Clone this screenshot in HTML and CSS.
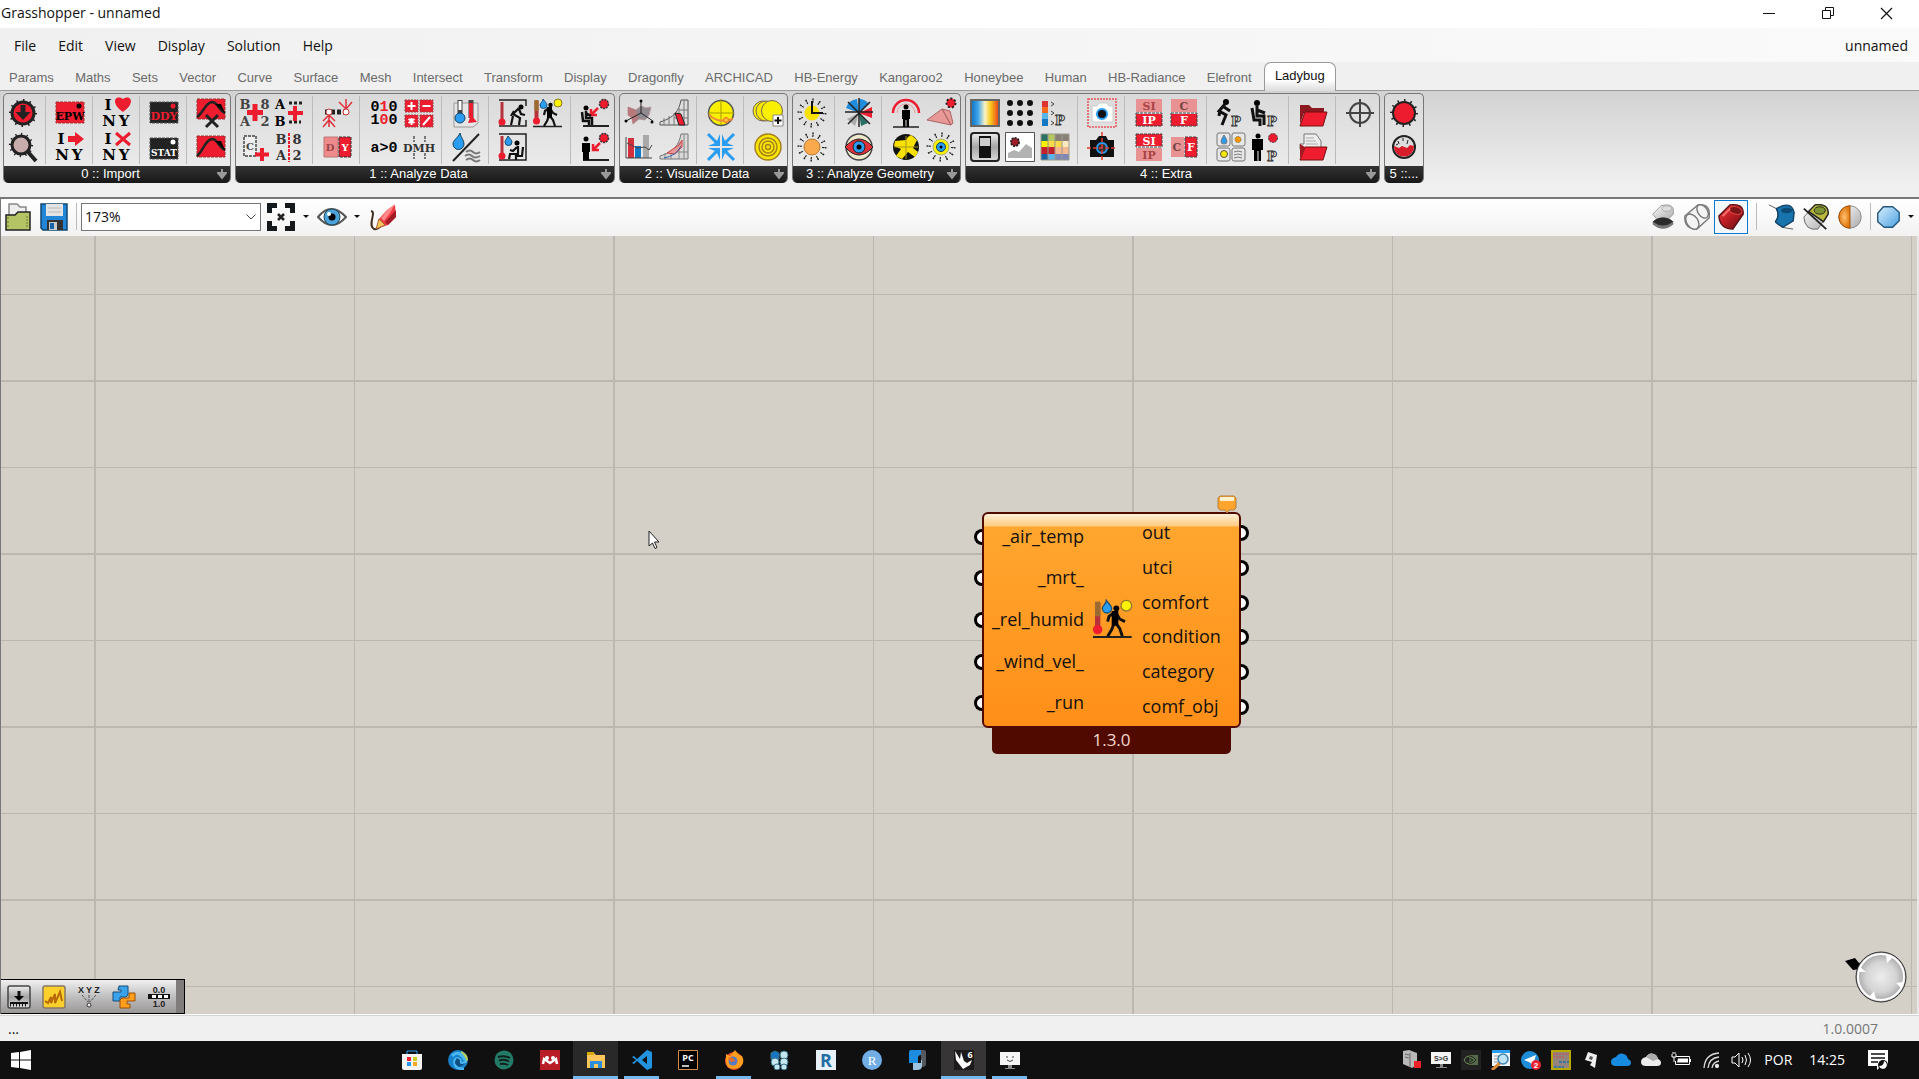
FILE: index.html
```html
<!DOCTYPE html>
<html lang="en">
<head>
<meta charset="utf-8">
<title>Grasshopper - unnamed</title>
<link rel="stylesheet" href="styles.css">
</head>
<body>
<svg class="defs" aria-hidden="true">
  <defs>
    <linearGradient id="spectrum"><stop offset="0" stop-color="#0a6fc0"/><stop offset=".25" stop-color="#3fa4ea"/><stop offset=".5" stop-color="#fbf3c4"/><stop offset=".7" stop-color="#f8c81c"/><stop offset="1" stop-color="#e83a1c"/></linearGradient>
    <linearGradient id="metal" x2="0" y2="1"><stop offset="0" stop-color="#eee"/><stop offset=".5" stop-color="#a5a5a5"/><stop offset="1" stop-color="#dcdcdc"/></linearGradient>
    <linearGradient id="redfade" x2="1" y2="1"><stop offset="0" stop-color="#f04040"/><stop offset=".5" stop-color="#b81c22"/><stop offset="1" stop-color="#5c0c10"/></linearGradient>
    <linearGradient id="bluefade" x2="1" y2="1"><stop offset="0" stop-color="#d8f0ff"/><stop offset="1" stop-color="#4a9fe0"/></linearGradient>
    <linearGradient id="greyfade" x2="1" y2="1"><stop offset="0" stop-color="#fff"/><stop offset="1" stop-color="#aaa"/></linearGradient>
    <radialGradient id="dial"><stop offset="0" stop-color="#ededed"/><stop offset=".6" stop-color="#d4d4d4"/><stop offset="1" stop-color="#a2a2a2"/></radialGradient>
    <radialGradient id="orange"><stop offset="0" stop-color="#ffc070"/><stop offset="1" stop-color="#e07810"/></radialGradient>
    <symbol id="walker" viewBox="0 0 30 30"><path d="M0 28.500H29" stroke="#222" stroke-width="1.500"/><path d="M3.500 3V22" stroke="#b5323a" stroke-width="4"/><path d="M3.500 2V13" stroke="#9a6a30" stroke-width="4"/><circle cx="3.500" cy="23" r="3.500" fill="#ed1c2e"/><path d="M10 1c2 3 4 4 4 6a3.500 3.500 0 0 1-7 0c0-2 3-3 3-6z" fill="#2a9df0" stroke="#1a527c"/><circle cx="25" cy="5" r="4" fill="#fff200" stroke="#887a30"/><circle cx="17.500" cy="7" r="2.200"/><path d="M16 10l-4 3-1 4M17 10l3 5 4 2M16 18l-2 5-3 5M17 18l3 4 2 6" fill="none" stroke="#111" stroke-width="2.200"/><path d="M14 9h5v11h-5z"/></symbol>
    <symbol id="spikes" viewBox="0 0 30 30"><circle cx="15" cy="15" r="12.500" fill="none" stroke="#222" stroke-width="3" stroke-dasharray="1.500 5"/></symbol>
    <symbol id="rays" viewBox="0 0 30 30"><g fill="none" stroke="#222"><circle cx="15" cy="15" r="13.500" stroke-width="2" stroke-dasharray="1.500 5.560"/><circle cx="15" cy="15" r="11" stroke-width="2" stroke-dasharray="1.200 4.560"/></g></symbol>
    <symbol id="drop" viewBox="0 0 10 11"><path d="M5 0v5M1 4h8L5 9z" fill="#999" stroke="#999" stroke-width="2"/></symbol>
  </defs>
</svg>

<header class="titlebar">
  <span class="title">Grasshopper - unnamed</span>
  <div class="window-buttons">
    <button aria-label="Minimize"><svg width="12" height="12"><path d="M0 6.500H12" stroke="#111"/></svg></button>
    <button aria-label="Restore"><svg width="12" height="12" fill="none" stroke="#111"><path d="M.5 3.500H8.500V11.500H.5zM3.500 3V.5H11.500V8.500H9"/></svg></button>
    <button aria-label="Close"><svg width="13" height="13"><path d="M1 1L12 12M12 1L1 12" stroke="#111" stroke-width="1.200"/></svg></button>
  </div>
</header>

<nav class="menubar">
  <button>File</button><button>Edit</button><button>View</button><button>Display</button><button>Solution</button><button>Help</button>
  <span class="doc-name">unnamed</span>
</nav>

<nav class="tabs">
  <button>Params</button><button>Maths</button><button>Sets</button><button>Vector</button><button>Curve</button><button>Surface</button><button>Mesh</button><button>Intersect</button><button>Transform</button><button>Display</button><button>Dragonfly</button><button>ARCHICAD</button><button>HB-Energy</button><button>Kangaroo2</button><button>Honeybee</button><button>Human</button><button>HB-Radiance</button><button>Elefront</button><button class="active">Ladybug</button>
</nav>

<section class="ribbon">
  <div class="panel">
    <div class="groups">
      <div class="group">
        <button aria-label="Download weather"><svg viewBox="0 0 30 30"><use href="#spikes"/><circle cx="15" cy="15" r="11" fill="#ed1c2e" stroke="#222" stroke-width="3"/><path d="M12.500 7h5v7h5L15 22l-7.500-8h5z" fill="#222"/></svg></button>
        <button aria-label="EPWmap"><svg viewBox="0 0 30 30"><use href="#spikes" width="26" height="26"/><path d="M20 20L28 29" stroke="#222" stroke-width="4"/><circle cx="13" cy="13" r="9" fill="#c9acac" stroke="#222" stroke-width="3"/></svg></button>
      </div>
      <div class="group">
        <button aria-label="Import EPW"><svg viewBox="0 0 30 30"><path d="M1 4h28v21H1z" fill="#ed1c2e" stroke="#a33" stroke-dasharray="3 1"/><circle cx="24" cy="8" r="2.500"/><text x="15" y="22" font-size="11">EPW</text></svg></button>
        <button aria-label="Import location"><svg viewBox="0 0 30 30"><g class="big"><text x="6" y="12">I</text><text x="7" y="28">N</text><text x="22" y="28">Y</text></g><path d="M13 4h7V0l9 7-9 7v-4h-7z" fill="#ed1c2e"/></svg></button>
      </div>
      <div class="group">
        <button aria-label="Construct location"><svg viewBox="0 0 30 30"><g class="big"><text x="6" y="12">I</text><text x="7" y="28">N</text><text x="22" y="28">Y</text></g><path d="M21 14C8 5 13-4 21 1c8-5 13 4 0 13z" fill="#ed1c2e"/></svg></button>
        <button aria-label="Deconstruct location"><svg viewBox="0 0 30 30"><g class="big"><text x="6" y="12">I</text><text x="7" y="28">N</text><text x="22" y="28">Y</text></g><path d="M14 1L28 13M28 1L14 13" stroke="#ed1c2e" stroke-width="3"/></svg></button>
      </div>
      <div class="group">
        <button aria-label="Import DDY"><svg viewBox="0 0 30 30"><path d="M1 4h28v21H1z" fill="#222" stroke="#555" stroke-dasharray="3 1"/><circle cx="24" cy="8" r="2.500" fill="#ed1c2e"/><text x="15" y="22" font-size="11" fill="#ed1c2e">DDY</text></svg></button>
        <button aria-label="Import STAT"><svg viewBox="0 0 30 30"><path d="M1 6h28v21H1z" fill="#222" stroke="#555" stroke-dasharray="3 1"/><circle cx="24" cy="10" r="2.500" fill="#fff"/><text x="15" y="24" font-size="9" fill="#fff">STAT</text></svg></button>
      </div>
      <div class="group">
        <button aria-label="Design day"><svg viewBox="0 0 30 30"><path d="M1 1h28v20H1z" fill="#ed1c2e" stroke="#933" stroke-dasharray="3 1"/><path d="M1 19C8 14 9 5 16 4c6 0 6 8 13 11" fill="none" stroke="#222" stroke-width="2.500"/><path d="M19 6h6l4 9z"/><path d="M10 17L22 29M22 17L10 29" stroke="#222" stroke-width="3"/></svg></button>
        <button aria-label="Import design day"><svg viewBox="0 0 30 30"><path d="M1 4h28v21H1z" fill="#ed1c2e" stroke="#933" stroke-dasharray="3 1"/><path d="M1 24C8 18 9 8 16 7c6 0 6 8 13 11" fill="none" stroke="#222" stroke-width="2.500"/><path d="M19 9h6l4 9z"/></svg></button>
      </div>
    </div>
    <div class="label"><span>0 :: Import</span><svg><use href="#drop"/></svg></div>
  </div>

  <div class="panel">
    <div class="groups">
      <div class="group two">
        <button aria-label="Arithmetic"><svg viewBox="0 0 30 30"><g fill="#444"><text x="5" y="11">B</text><text x="25" y="11">8</text><text x="5" y="28">A</text><text x="25" y="28">2</text></g><path d="M15 6V23M7 14.500H23" stroke="#ed1c2e" stroke-width="5"/></svg></button>
        <button aria-label="Construct data"><svg viewBox="0 0 30 30"><text x="5" y="11">A</text><text x="5" y="28">B</text><path d="M14 5h15M14 24h12" stroke="#222" stroke-width="3" stroke-dasharray="3 2"/><path d="M20 8V23M13 15H28" stroke="#ed1c2e" stroke-width="4"/></svg></button>
        <button aria-label="Construct header"><svg viewBox="0 0 30 30"><path d="M4 4h12v20H4z" fill="#eee" stroke="#444" stroke-width="1.500" stroke-dasharray="3 1"/><text x="10" y="18" font-size="10" fill="#444">C</text><path d="M22 16V29M15 22.500H29" stroke="#ed1c2e" stroke-width="4"/></svg></button>
        <button aria-label="Deconstruct data"><svg viewBox="0 0 30 30"><g fill="#333"><text x="6" y="12">B</text><text x="22" y="12">8</text><text x="6" y="28">A</text><text x="22" y="28">2</text></g><path d="M14 1V30" stroke="#ed1c2e" stroke-width="2" stroke-dasharray="3 1"/></svg></button>
      </div>
      <div class="group">
        <button aria-label="Average data"><svg viewBox="0 0 30 30"><path d="M3 14h23" stroke="#222" stroke-width="5" stroke-dasharray="4 2"/><path d="M7 29V16M1 23l6-6 6 6M1 29l6-7 6 7M24 1v10M17 4l7 7 6-7" fill="none" stroke="#e2303a" stroke-width="1.500"/><circle cx="7" cy="14" r="3" fill="#fff" stroke="#c33"/><circle cx="24" cy="14" r="3" fill="#fff" stroke="#c33"/></svg></button>
        <button aria-label="Day to year"><svg viewBox="0 0 30 30"><path d="M2 5h14v20H2z" fill="#ee8a8c" stroke="#bb7777"/><path d="M17 5h12v20H17z" fill="#ed1c2e" stroke="#333" stroke-dasharray="3 1"/><text x="8" y="19" font-size="10" fill="#944">D</text><text x="23" y="19" font-size="10" fill="#fff">Y</text></svg></button>
      </div>
      <div class="group two">
        <button aria-label="Pattern"><svg viewBox="0 0 30 30"><g class="mono"><text x="15" y="13">0<tspan fill="#ed1c2e">1</tspan>0</text><text x="15" y="26">1<tspan fill="#ed1c2e">0</tspan>0</text></g></svg></button>
        <button aria-label="Data math"><svg viewBox="0 0 30 30"><path d="M1 2h13v12H1zM16 2h13v12H16zM1 17h13v12H1zM16 17h13v12H16z" fill="#ed1c2e" stroke="#944" stroke-dasharray="2 1"/><path d="M7.500 4v8M3.500 8h8M18.500 8h8M4.500 21l6 4M4.500 25l6-4M7.500 20v7M19 27l7-8" stroke="#fff" stroke-width="2"/></svg></button>
        <button aria-label="Conditional"><svg viewBox="0 0 30 30"><g class="mono"><text x="15" y="20">a&gt;0</text></g></svg></button>
        <button aria-label="Time interval"><svg viewBox="0 0 30 30"><path d="M10 4V10M10 21V27M21 4V10M21 21V27" stroke="#555" stroke-width="1.500" stroke-dasharray="3 1"/><text x="15" y="20" font-size="11" fill="#333">DMH</text></svg></button>
      </div>
      <div class="group">
        <button aria-label="Dry bulb and dew point"><svg viewBox="0 0 30 30"><path d="M3 5h24v20l-5 4H3z" fill="#e6e6e6" stroke="#999"/><path d="M9 2V18M20 2V20" stroke="#444" stroke-width="5"/><path d="M9 3V12" stroke="#fff" stroke-width="3"/><path d="M20 5V20" stroke="#ed1c2e" stroke-width="4"/><circle cx="9" cy="20" r="5" fill="#2a9df0" stroke="#146"/><path d="M20 17l6 7-9 1z" fill="#ed1c2e"/></svg></button>
        <button aria-label="Humidity ratio"><svg viewBox="0 0 30 30"><path d="M2 29L28 2" stroke="#222" stroke-width="2"/><path d="M9 1c1 5 4 7 4 11a5 5 0 0 1-11 0C2 8 7 6 9 1z" fill="#2a9df0" stroke="#146"/><path d="M15 20q4-3 7 0t7 0M14 24q4-3 7 0t8 0M15 28q4-3 7 0t7 0" fill="none" stroke="#777" stroke-width="2"/></svg></button>
      </div>
      <div class="group two">
        <button aria-label="Adaptive comfort"><svg viewBox="0 0 30 30"><path d="M1 2H28V8M28 22V28H1" fill="none" stroke="#222" stroke-width="1.500"/><path d="M4 4V22" stroke="#b5323a" stroke-width="3"/><circle cx="4" cy="24" r="3.500" fill="#ed1c2e"/><circle cx="23" cy="9" r="2.500"/><path d="M21 10l-6 6 7 4-1 7M16 13l-3 5M15 18l-2 9M21 11l2 5 4 1" fill="none" stroke="#111" stroke-width="2.200"/></svg></button>
        <button aria-label="UTCI comfort"><svg><use href="#walker"/></svg></button>
        <button aria-label="PMV comfort"><svg viewBox="0 0 30 30"><path d="M1 2H28V28H1" fill="none" stroke="#222" stroke-width="1.500"/><path d="M4 4V22" stroke="#b5323a" stroke-width="3"/><circle cx="4" cy="24" r="3.500" fill="#ed1c2e"/><path d="M10 4c2 3 4 4 4 6a3.500 3.500 0 0 1-7 0c0-2 2-3 3-6z" fill="#2a9df0" stroke="#146"/><circle cx="19" cy="11" r="2.500"/><path d="M20 14v8h-8l-1 5M19 15l-4 4-3-1M25 15l-1 9h-6v4" fill="none" stroke="#111" stroke-width="2.200"/></svg></button>
      </div>
      <div class="group">
        <button aria-label="Indoor solar MRT"><svg viewBox="0 0 30 30"><path d="M3 28H29" stroke="#222" stroke-width="2"/><circle cx="24" cy="6" r="4.500" fill="#ed1c2e" stroke="#333" stroke-width="1.500" stroke-dasharray="2 1"/><path d="M18 10l-6 6m-1-5v6h6" stroke="#ed1c2e" stroke-width="2.500" fill="none"/><circle cx="6" cy="10" r="2.500"/><path d="M6 13v7h6v7M2 14l1 9h6v4M6 15l5 3" fill="none" stroke="#111" stroke-width="2.500"/></svg></button>
        <button aria-label="Outdoor solar MRT"><svg viewBox="0 0 30 30"><path d="M3 28H29" stroke="#222" stroke-width="2"/><circle cx="24" cy="6" r="4.500" fill="#ed1c2e" stroke="#333" stroke-width="1.500" stroke-dasharray="2 1"/><path d="M20 11l-6 6m-1-5v6h6" stroke="#ed1c2e" stroke-width="2.500" fill="none"/><circle cx="6" cy="7" r="2.500"/><path d="M2 11h8v9H9v8H3v-8H2z"/></svg></button>
      </div>
    </div>
    <div class="label"><span>1 :: Analyze Data</span><svg><use href="#drop"/></svg></div>
  </div>

  <div class="panel">
    <div class="groups">
      <div class="group two">
        <button aria-label="Wind profile"><svg viewBox="0 0 30 30"><path d="M4 9l8 3 5-4 5 2 5-1-2 8-4 5-6-1-6 5-1-6-4-3z" fill="#8e8a90" stroke="#b99"/><path d="M4 9l8 3 2 8-5 6-1-6-4-3z" fill="#b8787c"/><path d="M17 3V15L2 23M17 15l12 8" fill="none" stroke="#222"/><circle cx="2" cy="23" r="1.500"/><circle cx="28" cy="24" r="1.500"/><circle cx="17" cy="3" r="1.500"/></svg></button>
        <button aria-label="Psychrometric chart"><svg viewBox="0 0 30 30"><path d="M1 27V24C15 20 20 13 22 2h7V27z" fill="#ddd" stroke="#555"/><path d="M5 20V27M10 18V27M15 15V27M20 10V27M25 2V27M20 12h9M15 20h14" stroke="#777"/><path d="M16 15l6 1 4 11h-6z" fill="#ed1c2e" stroke="#222"/></svg></button>
        <button aria-label="Monthly chart"><svg viewBox="0 0 30 30"><path d="M4 6h6v20H4z" fill="#d32f3c"/><path d="M11 14h6v12h-6z" fill="#1479c4"/><path d="M19 3h6v23h-6z" fill="#a9a9a9"/><path d="M2 5V26H28M3 11l10 5 8-1 4 3 3-5" fill="none" stroke="#444"/></svg></button>
        <button aria-label="Adaptive chart"><svg viewBox="0 0 30 30"><path d="M1 27V24C15 20 20 13 22 2h7V27z" fill="#d8d8d8" stroke="#777"/><path d="M6 21V27M12 18V27M20 10V27M25 2V27M15 20h14" stroke="#888"/><path d="M8 21l12-8 3-5v7l-7 7z" fill="#e89a98" stroke="#c44"/><path d="M5 26q12-2 17-12" stroke="#36a" fill="none"/></svg></button>
      </div>
      <div class="group">
        <button aria-label="Sunpath"><svg viewBox="0 0 30 30"><circle cx="15" cy="15" r="12.500" fill="#f8f000" stroke="#555" stroke-width="1.500"/><path d="M15 1V27M2 15H28" stroke="#a90"/><path d="M3 17q10 9 24 4" fill="none" stroke="#e84" stroke-width="2"/><circle cx="20" cy="22" r="2.500" fill="#fb3" stroke="#e63"/></svg></button>
        <button aria-label="Wind rose"><svg viewBox="0 0 30 30"><path d="M2 2l9 9M28 2l-9 9M2 28l9-9M28 28l-9-9" stroke="#2a9df0" stroke-width="3"/><path d="M14 2V14H2l7-3-3-4 5 2zM16 2V14H28l-7-3 3-4-5 2zM14 28V16H2l7 3-3 4 5-2zM16 28V16H28l-7 3 3 4-5-2z" fill="#2a9df0"/></svg></button>
      </div>
      <div class="group">
        <button aria-label="Sky mask"><svg viewBox="0 0 30 30"><circle cx="10" cy="13" r="10" fill="#f8f000" stroke="#765"/><circle cx="13" cy="13" r="10" fill="#f8e800" stroke="#765"/><circle cx="19" cy="13" r="10.500" fill="#f8f000" stroke="#765"/><path d="M20 17h10v11H20z" fill="#fff" stroke="#888"/><path d="M25 19v7M21.500 22.500h7" stroke="#111" stroke-width="2"/></svg></button>
        <button aria-label="Sky dome"><svg viewBox="0 0 30 30" fill="#f8e800" stroke="#a88020" stroke-width="1.500"><circle cx="15" cy="15" r="13"/><circle cx="15" cy="15" r="9"/><circle cx="15" cy="15" r="6"/><circle cx="15" cy="15" r="2.500"/></svg></button>
      </div>
    </div>
    <div class="label"><span>2 :: Visualize Data</span><svg><use href="#drop"/></svg></div>
  </div>

  <div class="panel">
    <div class="groups">
      <div class="group">
        <button aria-label="Direct sun hours"><svg viewBox="0 0 30 30"><use href="#rays"/><circle cx="15" cy="15" r="7.500" fill="#f8e000"/><path d="M15 3V15H26" fill="none" stroke="#111" stroke-width="2"/></svg></button>
        <button aria-label="Incident radiation"><svg viewBox="0 0 30 30"><use href="#rays"/><circle cx="15" cy="15" r="8" fill="#faa94c" stroke="#b87b38"/></svg></button>
      </div>
      <div class="group">
        <button aria-label="Radiation rose"><svg viewBox="0 0 30 30"><path d="M15 15V1a13 13 0 0 1 10 5zM15 15L2 10A13 13 0 0 1 13 1z" fill="#218bdc"/><path d="M15 15L28 9v11z" fill="#ed1c2e"/><path d="M15 15L3 21l8 7z" fill="#aaa"/><path d="M15 15l9 10-7 3z" fill="#2a7064"/><path d="M15 0V29M1 14H29M4 4L26 26M26 4L4 26" stroke="#222" stroke-width="1.500"/></svg></button>
        <button aria-label="View percent"><svg viewBox="0 0 30 30"><circle cx="15" cy="15" r="13" fill="#eee8cc" stroke="#444" stroke-width="1.500"/><path d="M1 15q14-16 28 0q-14 16-28 0z" fill="#e2303a" stroke="#222"/><circle cx="15" cy="15" r="6" fill="#2a9df0" stroke="#222"/><circle cx="15" cy="15" r="2.500"/></svg></button>
      </div>
      <div class="group two">
        <button aria-label="Human to sky"><svg viewBox="0 0 30 30"><path d="M2 15a13 13 0 0 1 26 0" fill="none" stroke="#ed1c2e" stroke-width="2.500"/><path d="M6 15a9 9 0 0 1 18 0" fill="none" stroke="#e99" stroke-width="1"/><path d="M2 29H28" stroke="#222" stroke-width="1.500"/><circle cx="15" cy="9" r="2.500"/><path d="M11 12h8v9h-1v8h-2.500v-7h-1v7H12v-8h-1z"/></svg></button>
        <button aria-label="Shadow study"><svg viewBox="0 0 30 30"><path d="M1 22l15-11 9 16zM16 11l8 2 3 12-2 2z" fill="#e99898" stroke="#a66"/><circle cx="25" cy="5" r="4.500" fill="#ed1c2e" stroke="#222" stroke-width="2" stroke-dasharray="2 2"/></svg></button>
        <button aria-label="Benefit sky"><svg viewBox="0 0 30 30"><circle cx="15" cy="15" r="13" fill="#111"/><path d="M15 8A9 9 0 0 1 20 3l6 5-4 8 5 4-3 5-7-5-6 7-6-3 5-7-7-3 1-5z" fill="#f8e000"/><path d="M15 4V27M3 15H27" stroke="#a92"/></svg></button>
        <button aria-label="Visibility percent"><svg viewBox="0 0 30 30"><use href="#rays"/><circle cx="15" cy="15" r="8" fill="#f8f000" stroke="#aa7"/><circle cx="15" cy="15" r="4.500" fill="#2a9df0" stroke="#146"/><circle cx="15" cy="15" r="1.500"/></svg></button>
      </div>
    </div>
    <div class="label"><span>3 :: Analyze Geometry</span><svg><use href="#drop"/></svg></div>
  </div>

  <div class="panel">
    <div class="groups">
      <div class="group three">
        <button aria-label="Legend gradient"><svg viewBox="0 0 30 30"><path d="M1 2h28v26H1z" fill="url(#spectrum)" stroke="#666" stroke-width="2"/></svg></button>
        <button aria-label="Spatial grid"><svg viewBox="0 0 30 30"><path d="M5 5h21M5 15h21M5 25h21" stroke="#111" stroke-width="6" stroke-linecap="round" stroke-dasharray="0 10"/></svg></button>
        <button aria-label="Legend parameters"><svg viewBox="0 0 30 30"><path d="M2 3h6v6H2z" fill="#d33"/><path d="M2 9h6v6H2z" fill="#f66a20"/><path d="M2 15h6v6H2z" fill="#5ab5ef"/><path d="M2 21h6v7H2z" fill="#1479c4"/><path d="M11 4l3 2-3 2M11 13l3 2-3 2M11 23l3 2-3 2" stroke="#444" fill="none"/><text class="letter-p" x="20" y="27">P</text></svg></button>
        <button aria-label="Preview toggle"><svg viewBox="0 0 30 30"><rect x="1" y="1" width="28" height="28" rx="3" fill="url(#metal)" stroke="#222" stroke-width="2"/><path d="M9 4h12v22H9z" fill="#111"/><path d="M10 6h10v8H10z" fill="#ccc"/></svg></button>
        <button aria-label="Image viewer"><svg viewBox="0 0 30 30"><path d="M.5.500h29v29H.5z" fill="#fff" stroke="#555"/><circle cx="10" cy="10" r="4" fill="#a21c28" stroke="#222" stroke-width="2" stroke-dasharray="2 1"/><path d="M3 26v-5l6-3 5 2 7-8 6 4v10z" fill="#b2b2b2"/></svg></button>
        <button aria-label="Color set"><svg viewBox="0 0 30 30"><path d="M1 2h7v7H1z" fill="#2a7064"/><path d="M8 2h7v7H8z" fill="#b8c860"/><path d="M15 2h14v7H15z" fill="#888078"/><path d="M1 9h7v6H1z" fill="#f8f000"/><path d="M8 9h14v6H8z" fill="#fbd84c"/><path d="M22 9h7v6H22z" fill="#fbe9c0"/><path d="M1 15h14v7H1z" fill="#c4202c"/><path d="M15 15h14v7H15z" fill="#f4b890"/><path d="M1 22h7v6H1z" fill="#1a62a8"/><path d="M8 22h7v6H8z" fill="#5ab5ef"/><path d="M15 22h14v6H15z" fill="#7c88b8"/><path d="M1 2h28v26H1zM8 2V28M15 2V28M22 2V28" fill="none" stroke="#998"/></svg></button>
      </div>
      <div class="group">
        <button aria-label="Set view"><svg viewBox="0 0 30 30"><path d="M1 1h28v28H1z" fill="none" stroke="#e8525a" stroke-width="1.500" stroke-dasharray="2 1"/><path d="M5 8h5l2-3h8l2 3h4v16H5z" fill="#fff" stroke="#ccc"/><circle cx="15" cy="16" r="5" fill="#111" stroke="#2a9df0" stroke-width="2"/></svg></button>
        <button aria-label="Capture view"><svg viewBox="0 0 30 30"><path d="M3 8h6l3-4h7l2 4h6v17H3z" fill="#111"/><circle cx="15" cy="16" r="5" fill="#333" stroke="#2a9df0" stroke-width="2"/><path d="M15 0V30M0 16H30" stroke="#e23a30" stroke-width="1.500" stroke-dasharray="4 2"/></svg></button>
      </div>
      <div class="group two">
        <button aria-label="SI to IP"><svg viewBox="0 0 30 30"><path d="M2 1h26v13H2z" fill="#e89294"/><path d="M2 16h26v12H2z" fill="#ed1c2e"/><path d="M2 15h26V28H2z" fill="none" stroke="#444" stroke-dasharray="3 1"/><text x="15" y="12" font-size="11" fill="#a44">SI</text><text x="15" y="26" font-size="11" fill="#fff">IP</text></svg></button>
        <button aria-label="C to F"><svg viewBox="0 0 30 30"><path d="M2 1h26v13H2z" fill="#e89294"/><path d="M2 16h26v12H2z" fill="#ed1c2e"/><path d="M2 15h26V28H2z" fill="none" stroke="#444" stroke-dasharray="3 1"/><text x="15" y="12" font-size="11" fill="#744">C</text><text x="15" y="26" font-size="11" fill="#fff">F</text></svg></button>
        <button aria-label="IP to SI"><svg viewBox="0 0 30 30"><path d="M2 2h26v12H2z" fill="#ed1c2e"/><path d="M2 16h26v13H2z" fill="#e89294"/><path d="M2 2h26V15H2z" fill="none" stroke="#444" stroke-dasharray="3 1"/><text x="15" y="13" font-size="11" fill="#fff">SI</text><text x="15" y="27" font-size="11" fill="#a44">IP</text></svg></button>
        <button aria-label="F to C"><svg viewBox="0 0 30 30"><path d="M2 5h13v20H2z" fill="#e89294"/><path d="M16 5h12v20H16z" fill="#ed1c2e" stroke="#444" stroke-dasharray="3 1"/><text x="8" y="19" font-size="11" fill="#744">C</text><text x="22" y="19" font-size="11" fill="#fff">F</text></svg></button>
      </div>
      <div class="group two">
        <button aria-label="Adaptive parameters"><svg viewBox="0 0 30 30"><circle cx="10" cy="4" r="3"/><path d="M9 6l-6 7 7 4-4 10M8 9l6 4M4 12l-1 6" fill="none" stroke="#111" stroke-width="3"/><text class="letter-p" x="20" y="28">P</text></svg></button>
        <button aria-label="PMV parameters"><svg viewBox="0 0 30 30"><circle cx="6" cy="5" r="3"/><path d="M6 8v10h7v9M1 10l2 12h6v6M6 12l8 3" fill="none" stroke="#111" stroke-width="3"/><text class="letter-p" x="21" y="28">P</text></svg></button>
        <button aria-label="UTCI parameters"><svg viewBox="0 0 30 30" fill="#e8e8e8" stroke="#777"><rect x="1" y="1" width="13" height="13" rx="2"/><rect x="16" y="1" width="13" height="13" rx="2"/><rect x="1" y="16" width="13" height="13" rx="2"/><rect x="16" y="16" width="13" height="13" rx="2"/><path d="M8 3q6 9 0 9t0-9z" fill="#2a9df0"/><circle cx="22" cy="7.500" r="3" fill="#f90" stroke="#555" stroke-dasharray="1 1"/><circle cx="8" cy="22" r="3.500" fill="#f8e800" stroke="#555"/><path d="M18 20q4-2 8 0M18 23q4-2 8 0M18 26q4-2 8 0" fill="none"/></svg></button>
        <button aria-label="Solar body parameters"><svg viewBox="0 0 30 30"><circle cx="7" cy="4" r="2.500"/><path d="M1 7h11v11h-2v11H7.500V19h-1v10H3V18H1z"/><circle cx="22" cy="6" r="4.500" fill="#ed1c2e" stroke="#444" stroke-dasharray="2 1"/><text class="letter-p" x="21" y="29">P</text></svg></button>
      </div>
      <div class="group">
        <button aria-label="Folder"><svg viewBox="0 0 30 30"><path d="M2 7h9l3 3h12v5H6L2 26z" fill="#8c1820"/><path d="M7 14h22l-4 14H2z" fill="#ed1c2e" stroke="#711"/></svg></button>
        <button aria-label="Open folder"><svg viewBox="0 0 30 30"><path d="M2 12h4V2h12l5 7v8H2z" fill="#eee" stroke="#777"/><path d="M8 6h8M8 9h10M8 12h12" stroke="#aaa"/><path d="M7 15h22l-4 13H2z" fill="#ed1c2e" stroke="#711"/><path d="M2 12v15l5-12z" fill="#a51822"/></svg></button>
      </div>
      <div class="group">
        <button aria-label="North"><svg viewBox="0 0 30 30" fill="none" stroke="#444" stroke-width="2"><circle cx="15" cy="15" r="10"/><path d="M15 1V29M1 15H29"/></svg></button>
      </div>
    </div>
    <div class="label"><span>4 :: Extra</span><svg><use href="#drop"/></svg></div>
  </div>

  <div class="panel">
    <div class="groups">
      <div class="group">
        <button aria-label="Versioner"><svg viewBox="0 0 30 30"><use href="#spikes"/><circle cx="15" cy="15" r="11" fill="#ed1c2e" stroke="#222" stroke-width="2"/></svg></button>
        <button aria-label="Sync"><svg viewBox="0 0 30 30"><circle cx="15" cy="15" r="11" fill="#ddd" stroke="#222" stroke-width="2"/><path d="M5 14l5 2 3-2 5 2 3-3 4 1a10 10 0 0 1-20 1z" fill="#d81c2a"/><path d="M9 9l1 3M14 6v3M19 8l-1 4M7 13l2-1" stroke="#222"/></svg></button>
      </div>
    </div>
    <div class="label"><span>5 ::...</span></div>
  </div>
</section>

<section class="toolbar">
  <button class="tool" aria-label="Open"><svg viewBox="0 0 30 30"><path d="M5 14V2h8l3 3h6v10z" fill="#eee" stroke="#888" stroke-width="1.500"/><path d="M2 28V13h9l3-3h12v18z" fill="#b5c465" stroke="#222" stroke-width="1.500"/><path d="M3 16h3M3 20h3M3 24h3M23 14v12" stroke="#6e7a30" stroke-dasharray="2 1"/></svg></button>
  <button class="tool" aria-label="Save"><svg viewBox="0 0 30 30"><path d="M2 2h26v26H4l-2-2z" fill="#2185d8" stroke="#12456e" stroke-width="1.500"/><path d="M7 2h17v12H7z" fill="#e3e3e3"/><path d="M9 6h13M9 10h13" stroke="#bbb"/><path d="M8 18h16v10H8z" fill="#333"/><path d="M10 20h8v8h-8z" fill="#ccc"/><path d="M11 21h4v6h-4z" fill="#1767aa"/></svg></button>
  <span class="sep"></span>
  <label class="zoom"><select aria-label="Zoom level"><option>173%</option><option>100%</option></select><svg width="10" height="6"><path d="M.5.500L5 5L9.500.500" fill="none" stroke="#444"/></svg></label>
  <button class="tool" aria-label="Zoom extents"><svg viewBox="0 0 30 30"><path d="M3.500 11V3.500H11M19 3.500H26.500V11M26.500 19V26.500H19M11 26.500H3.500V19" fill="none" stroke="#16191c" stroke-width="5"/><path d="M12 12l6 6M18 12l-6 6" stroke="#222" stroke-width="2.500"/></svg></button>
  <button class="caret" aria-label="Zoom options"></button>
  <button class="tool" aria-label="Preview"><svg viewBox="0 0 30 30"><path d="M1 15Q14-1 29 15Q15 31 1 15z" fill="#fff" stroke="#555" stroke-width="2"/><circle cx="15" cy="15" r="8" fill="#4ba3dc" stroke="#245" /><circle cx="15" cy="15" r="3.500"/><circle cx="12" cy="12" r="2" fill="#fff"/></svg></button>
  <button class="caret" aria-label="Preview options"></button>
  <button class="tool" aria-label="Sketch"><svg viewBox="0 0 30 30"><path d="M3 9c6 1-4 14 3 18q3 1 7-3" fill="none" stroke="#432" stroke-width="2"/><path d="M27 3l1 12-8 8-9 3-1-8 9-10z" fill="#ef3b42"/><path d="M19 8l8-6-5 9-6 8-3-3z" fill="#f88"/><path d="M28 8v7l-8 8-3-3z" fill="#a21c27"/><path d="M11 17l6 6-9 4z" fill="#f7c35a" stroke="#a63"/></svg></button>
  <span class="grow"></span>
  <button class="tool view" aria-label="No preview"><svg viewBox="0 0 30 30"><path d="M4 12L13 3Q23 0 26 6V12L20 18H9z" fill="url(#greyfade)" stroke="#999"/><ellipse cx="19" cy="6" rx="5" ry="3" fill="#ddd" stroke="#aaa"/><path d="M4 20Q15 11 26 20v3q-11 9-22 0z" fill="#777"/><path d="M4 20Q15 11 26 20 15 28 4 20z" fill="#2b2b2b"/></svg></button>
  <button class="tool view" aria-label="Wireframe"><svg viewBox="0 0 30 30" fill="#f4f4f4" stroke="#777" stroke-width="1.500"><path d="M2 14L16 2Q30 0 28 16L15 28Q1 28 2 14z"/><ellipse cx="10" cy="20" rx="6" ry="9" transform="rotate(-35 10 20)"/><ellipse cx="21" cy="9" rx="5" ry="8" transform="rotate(-35 21 9)"/></svg></button>
  <button class="tool view selected" aria-label="Shaded"><svg viewBox="0 0 30 30"><path d="M2 14L14 2Q29 0 28 12L17 28Q3 28 2 14z" fill="url(#redfade)" stroke="#5a1014" stroke-width="1.500"/><ellipse cx="20" cy="8" rx="7" ry="4" fill="#7c1418" stroke="#d44" transform="rotate(15 20 8)"/><path d="M6 14L14 6" stroke="#ff7070" stroke-width="2"/></svg></button>
  <span class="sep"></span>
  <button class="tool view" aria-label="Selected only"><svg viewBox="0 0 30 30"><path d="M1 2l8 4q4 7-1 14l7 6 12 2" fill="none" stroke="#555"/><path d="M9 6Q25-3 28 10L27 19L16 26Q8 21 8 20q5-6 1-14z" fill="#1874ac" stroke="#114266" stroke-width="1.500"/><ellipse cx="20" cy="8" rx="6" ry="3" fill="#0d4c77"/></svg></button>
  <button class="tool view" aria-label="Document preview"><svg viewBox="0 0 30 30"><path d="M2 15L14 2Q29 0 28 12L17 28Q3 30 2 15z" fill="url(#greyfade)" stroke="#666"/><path d="M7 9L14 2Q29 0 28 12L23 20z" fill="#b8b83c" stroke="#222" stroke-width="1.500"/><path d="M2 6L26 28" stroke="#222" stroke-width="2"/><ellipse cx="19" cy="8" rx="6" ry="4" fill="#7d9430" stroke="#222"/></svg></button>
  <button class="tool view" aria-label="Mesh quality"><svg viewBox="0 0 30 30"><circle cx="15" cy="15" r="12" fill="url(#greyfade)" stroke="#888"/><path d="M15 3A12 12 0 0 0 15 27z" fill="url(#orange)" stroke="#a54f08"/></svg></button>
  <span class="sep tight"></span>
  <button class="tool view" aria-label="Display settings"><svg viewBox="0 0 30 30"><path d="M10 4h10l7 6v9l-7 7H11l-7-6v-9z" fill="url(#bluefade)" stroke="#26587e" stroke-width="1.500"/></svg></button>
  <button class="caret last" aria-label="Display options"></button>
</section>

<main class="canvas">
  <svg class="cursor" viewBox="0 0 13 20"><path d="M1 1V16L4.500 13L7 18.500L9 17.500L6.500 12H11z" fill="#fff" stroke="#222"/></svg>

  <article class="node">
    <svg class="balloon" viewBox="0 0 20 19"><path d="M3 1h14l2 2v10l-2 2h-5l-2 3-2-3H3l-2-2V3z" fill="#ffa42c" stroke="#b08040"/><path d="M3 2h14v4H3z" fill="#fff0d0"/></svg>
    <div class="body">
      <ul class="ports inputs"><li>_air_temp</li><li>_mrt_</li><li>_rel_humid</li><li>_wind_vel_</li><li>_run</li></ul>
      <svg class="node-icon"><use href="#walker"/></svg>
      <ul class="ports outputs"><li>out</li><li>utci</li><li>comfort</li><li>condition</li><li>category</li><li>comf_obj</li></ul>
    </div>
    <div class="version">1.3.0</div>
  </article>

  <div class="widget">
    <button aria-label="Slider"><svg viewBox="0 0 24 24"><rect x="1" y="1" width="22" height="22" rx="2" fill="url(#metal)" stroke="#444" stroke-width="1.500"/><path d="M12 6v6" stroke="#111" stroke-width="3"/><path d="M7 11h10l-5 5z"/><path d="M3 18h18" stroke="#111" stroke-width="2"/><path d="M3 20h18" stroke="#111" stroke-width="3" stroke-dasharray="1 2"/></svg></button>
    <button aria-label="Panel"><svg viewBox="0 0 24 24"><rect x="1" y="1" width="22" height="22" rx="2" fill="#fbd02c" stroke="#876" stroke-width="1.500"/><path d="M3 16l3 2 3-6v6l4-9v9l5-11 2 9" fill="none" stroke="#b96808" stroke-width="2"/></svg></button>
    <button aria-label="Deconstruct"><svg viewBox="0 0 24 24"><g class="tiny"><text x="4" y="8">X</text><text x="12" y="8">Y</text><text x="20" y="8">Z</text></g><path d="M5 10l6 7M12 10v7M19 10l-6 7" stroke="#555" stroke-dasharray="3 1"/><circle cx="12" cy="20" r="2" fill="#eee" stroke="#333"/></svg></button>
    <button aria-label="Python script"><svg viewBox="0 0 24 24"><path d="M7 1h9v9l-2 2H8v4H1V7h8V5H6z" fill="#3aa2ea" stroke="#164d78"/><path d="M17 8h6v8h-8v3h3v4H8v-8l2-2h7z" fill="#ff9d1c" stroke="#96500a"/></svg></button>
    <button aria-label="Remap"><svg viewBox="0 0 24 24"><g class="tiny"><text x="12" y="8">0.0</text><text x="12" y="22">1.0</text></g><path d="M1 9h22v5H1z" fill="#111"/><path d="M5 11.500h16" stroke="#fff" stroke-width="3" stroke-dasharray="4 2"/></svg></button>
    <span class="grip"></span>
  </div>

  <svg class="compass" viewBox="0 0 64 52"><path d="M2 10l10-3 4 5 5-2-4 8-7 1z"/><circle cx="38" cy="26" r="25" fill="url(#dial)" stroke="#333"/><circle cx="38" cy="26" r="23" fill="none" stroke="#fff" stroke-width="2"/><path d="M43 4l7 2-6 6zM60 31l-7 1 6 6zM33 48l-7-2 5-6zM17 16l6 5-7 0z" fill="#fff"/></svg>
</main>

<footer class="status"><span>...</span><span class="build">1.0.0007</span></footer>

<nav class="taskbar">
  <button class="start" aria-label="Start"><svg viewBox="0 0 20 20" fill="#fff"><path d="M0 3l8-1v7.500H0zM9 2l11-2v9.500H9zM0 10.500h8V18l-8-1zM9 10.500h11V20L9 18z"/></svg></button>
  <div class="apps">
    <button aria-label="Store"><svg viewBox="0 0 20 20"><path d="M5 4V1H15V4" fill="none" stroke="#2a9df0"/><path d="M0 4h20v14q0 2-2 2H2q-2 0-2-2z" fill="#f4f4f4"/><path d="M5 7h4v4H5z" fill="#e23"/><path d="M11 7h4v4h-4z" fill="#cc2"/><path d="M5 12h4v4H5z" fill="#29e"/><path d="M11 12h4v4h-4z" fill="#fa2"/></svg></button>
    <button aria-label="Edge"><svg viewBox="0 0 20 20"><circle cx="10" cy="10" r="10" fill="#1680c9"/><path d="M13 1q7 3 7 9l-4 4q2-6-3-8z" fill="#b5cc5c"/><path d="M4 6q6-6 11 1t-1 6q-3 0-2-3-3-3-5 0-2 9 9 9" fill="none" stroke="#4ab7f2" stroke-width="3"/><path d="M9 8q-5 5 2 9l8-4-5 1q-3 0-2-4z" fill="#114e80"/></svg></button>
    <button aria-label="Spotify"><svg viewBox="0 0 20 20"><circle cx="10" cy="10" r="9.500" fill="#237a66"/><path d="M4 7q7-2 12 1M5 10.500q6-2 10 1M6 14q5-1 8 1" fill="none" stroke="#10211c" stroke-width="2"/></svg></button>
    <button aria-label="Mendeley"><svg viewBox="0 0 20 20"><path d="M0 0h20v20H0z" fill="#b71c27"/><path d="M3 14l1-5 6 4 6-4 1 5" fill="none" stroke="#fff" stroke-width="2.500"/><circle cx="7" cy="8" r="2" fill="#fff"/><circle cx="13" cy="8" r="2" fill="#fff"/></svg></button>
    <button class="current running" aria-label="File Explorer"><svg viewBox="0 0 20 20"><path d="M1 3h7l2 2h9v13H1z" fill="#fcc65c"/><path d="M1 2h7v3H1z" fill="#d7a800"/><path d="M4 18v-7h12v7h-4v-4H8v4z" fill="#2a8edc"/></svg></button>
    <button class="running" aria-label="Visual Studio Code"><svg viewBox="0 0 20 20"><path d="M15 0l5 2v16l-5 2L5 11l-3 3-2-1 4-3-4-3 2-1 3 3zM15 6l-5 4 5 4z" fill="#2493df" fill-rule="evenodd"/></svg></button>
    <button aria-label="PyCharm"><svg viewBox="0 0 20 20"><path d="M.5.500h19v19H.5z" fill="#000" stroke="#d88c4c"/><text class="pc" x="10" y="11">PC</text><path d="M4 16h7" stroke="#fff" stroke-width="1.500"/></svg></button>
    <button class="running" aria-label="Firefox"><svg viewBox="0 0 20 20"><circle cx="10" cy="11" r="9" fill="#f5512c"/><path d="M2 4l4 2 5-6 4 5 3 1q4 8-4 12-11 3-12-6z" fill="#ff9d1c"/><circle cx="9" cy="11" r="4.500" fill="#587bc5"/><path d="M4 8q5-2 7 3l-4 1z" fill="#f36a22"/></svg></button>
    <button aria-label="3D viewer"><svg viewBox="0 0 20 20" fill="#c7e7ef" stroke="#37718a"><path d="M1 3l4-2 4 2v6H1z" fill="#1776c2"/><circle cx="14" cy="5" r="4"/><circle cx="14" cy="12" r="4"/><circle cx="5" cy="12" r="4"/><circle cx="7" cy="17" r="3"/><circle cx="14" cy="17" r="3"/></svg></button>
    <button aria-label="Revit"><svg viewBox="0 0 20 20"><path d="M0 0h20v20H0z" fill="#e7f1f7"/><text class="revit" x="10" y="17">R</text></svg></button>
    <button aria-label="RStudio"><svg viewBox="0 0 20 20"><circle cx="10" cy="10" r="10" fill="#70aee5"/><text class="rstudio" x="10" y="15">R</text></svg></button>
    <button aria-label="Publisher"><svg viewBox="0 0 20 20"><path d="M9 0h7q2 0 2 2v12q0 3-4 3h-3V6z" fill="#55585e"/><path d="M1 2q0-2 2-2h10v5q-3 0-3 4v4H1z" fill="#1b8ce0"/><path d="M5 13h5v-3h4v6q0 4-5 4H5z" fill="#9cc4e0"/><path d="M10 9q0-4 3-4v8h-3z" fill="#101010"/></svg></button>
    <button class="current running lit" aria-label="Rhinoceros"><svg viewBox="0 0 20 20"><path d="M0 0h20v20H0z" fill="#1c1a1a"/><path d="M1 1l5 8 1-7 3 9 3 2 5-3-2 5-7 4-7-9z" fill="#fff"/><text class="six" x="16" y="8">6</text></svg></button>
    <button class="running" aria-label="Screen recorder"><svg viewBox="0 0 20 20"><path d="M0 2h20v13H0z" fill="#f4f4f4"/><path d="M8 15h4v3h3v1H5v-1h3z" fill="#888"/><path d="M7 6v2M13 6v2M7 10q3 3 6 0" fill="none" stroke="#444"/></svg></button>
  </div>
  <div class="tray">
    <button aria-label="Server"><svg viewBox="0 0 20 20"><path d="M2 1l6-1 8 3v12l-5 3-9-4z" fill="#b8b8b8"/><path d="M4 4l4 1M4 7l4 1M9 3v14" stroke="#666"/><path d="M13 11h7v7h-7z" fill="#ee2028"/></svg></button>
    <button aria-label="ScreenToGif"><svg viewBox="0 0 20 20"><path d="M0 2h20v12H0z" fill="#f4f4f4"/><text class="stg" x="10" y="11">S&gt;G</text><path d="M9 14h3v3h4v1H5v-1h4z" fill="#888"/></svg></button>
    <button aria-label="NVIDIA"><svg viewBox="0 0 20 20"><path d="M0 0h20v20H0z" fill="#222"/><path d="M8 5h9v10H8z" fill="#56694a"/><path d="M3 10q6-8 12 0-6 7-12 0zM6 10q3-3 6 0-3 3-6 0" fill="none" stroke="#232a1e"/><path d="M3 10q2-4 5-4M3 10q2 4 5 4" fill="none" stroke="#71905a"/></svg></button>
    <button aria-label="Search tool"><svg viewBox="0 0 20 20"><path d="M1 0h18v16H1z" fill="#eef4f8"/><path d="M1 0h18v3H1z" fill="#2a9df0"/><path d="M3 6h7M3 9h6M3 12h6" stroke="#999"/><path d="M9 13l-8 7" stroke="#d88a3c" stroke-width="3"/><circle cx="12" cy="9" r="5" fill="#bfe4f8" stroke="#4683a8" stroke-width="1.500"/></svg></button>
    <button aria-label="Telegram"><svg viewBox="0 0 20 20"><circle cx="9" cy="10" r="9" fill="#1e8cd6"/><path d="M3 10l12-5-3 10-4-3z" fill="#fff"/><circle cx="15" cy="15" r="5" fill="#e92532"/><text class="badge" x="15" y="18">2</text></svg></button>
    <button aria-label="Monitor"><svg viewBox="0 0 20 20"><path d="M1 1h18v18H1z" fill="#95847e" stroke="#b9a900" stroke-width="2"/><path d="M2 4h16M2 7h11" stroke="#c64b50" stroke-dasharray="2 1"/><path d="M3 17h10M8 12h10" stroke="#3a77a0" stroke-width="2" stroke-dasharray="3 1"/></svg></button>
    <button aria-label="Drive"><svg viewBox="0 0 20 20"><path d="M7 2l9 3-2 13-5-3 2-3-7-2z" fill="#eee"/><path d="M9 6l3 1-1 3-3-1z" fill="#555"/></svg></button>
    <button aria-label="OneDrive"><svg viewBox="0 0 20 20"><path d="M5 16q-5 0-5-4t5-5q3-5 8-3 3 1 4 5 3 1 3 4 0 3-4 3z" fill="#168be0"/></svg></button>
    <button aria-label="OneDrive personal"><svg viewBox="0 0 20 20"><path d="M5 16q-5 0-5-4t5-5q3-5 8-3 3 1 4 5 3 1 3 4 0 3-4 3z" fill="#ececec"/><path d="M5 7q3-5 8-3 3 1 4 5l-5 2z" fill="#aaa"/></svg></button>
    <button aria-label="Battery"><svg viewBox="0 0 20 20"><path d="M5 6.500H18.500V14.500H4.500V11M1 4v3h4V4M2 2v2M4 2v2M3 7v5" fill="none" stroke="#fff"/><path d="M7 8.500h10v4H6z" fill="#fff"/><path d="M19 9h1v3h-1z" fill="#fff"/></svg></button>
    <button aria-label="Network"><svg viewBox="0 0 20 20" fill="none" stroke="#ddd" stroke-width="1.300"><path d="M3 18Q4 4 18 3M7 18Q8 8 18 7M11 18Q12 12 18 11"/><circle cx="16" cy="16" r="1.500" fill="#fff"/></svg></button>
    <button aria-label="Volume"><svg viewBox="0 0 20 20" fill="none" stroke="#fff"><path d="M1 7h3l4-4v14l-4-4H1zM11 7q2 3 0 6M14 5q3 5 0 10M17 3q5 7 0 14"/></svg></button>
  </div>
  <button class="lang">POR</button>
  <time class="clock">14:25</time>
  <button class="notify" aria-label="Notifications"><svg viewBox="0 0 20 20"><path d="M0 0h20v16h-7l-4 4v-4H0z" fill="#fff"/><path d="M3 4h14M3 8h14M3 12h7" stroke="#111" stroke-width="1.500"/><circle cx="15" cy="15" r="5" fill="#101010"/><path d="M16 11a4 4 0 1 1-5 5q5 0 5-5z" fill="#fff"/></svg></button>
</nav>
</body>
</html>
```
FILE: styles.css
```css
*, *::before { box-sizing: border-box; }

body {
  margin: 0;
  min-height: 100vh;
  display: flex;
  flex-direction: column;
  background: #f0f0f0;
  font: 14px/20px "Open Sans", "Noto Sans", sans-serif;
  color: #111;
  overflow-x: hidden;
}

button {
  margin: 0;
  padding: 0;
  border: 0;
  background: none;
  font: inherit;
  color: inherit;
}

svg { display: block; }
.defs { position: absolute; width: 0; height: 0; }

/* title and menus */
.titlebar {
  display: flex;
  align-items: center;
  justify-content: space-between;
  height: 28px;
  padding: 0 3px 2px 1px;
  background: #fff;
}
.window-buttons { display: flex; }
.window-buttons button {
  width: 59px;
  height: 26px;
  display: grid;
  place-items: center;
}
.menubar {
  display: flex;
  align-items: center;
  gap: 22px;
  height: 34px;
  padding: 2px 11px 0 14px;
  background: linear-gradient(90deg, #f0f0f0, #fafafa);
}
.doc-name { margin-left: auto; }

.tabs {
  display: flex;
  justify-content: space-between;
  max-width: 1336px;
  height: 28px;
  font: 13px/18px "Liberation Sans", Arial, sans-serif;
  color: #6b6b6b;
}
.tabs button { padding: 3px 10px 0 9px; white-space: nowrap; }
.tabs .active {
  height: 29px;
  padding: 0 10px 2px;
  position: relative;
  border: 1px solid #999;
  border-bottom: 0;
  border-radius: 7px 7px 0 0;
  background: linear-gradient(#fff 60%, #dcdcdc);
  color: #111;
}

/* component ribbon */
.ribbon {
  display: flex;
  gap: 4px;
  height: 107px;
  padding: 2px 3px 0;
  border-top: 1px solid #999;
  background: linear-gradient(#d2d2d2, #f0f0f0 90%);
}
.panel {
  height: 90px;
  display: flex;
  flex-direction: column;
  border: 1px solid #777;
  border-bottom: 0;
  border-radius: 5px;
  background: linear-gradient(#dadada, #eee);
  overflow: hidden;
}
.groups {
  display: flex;
  height: 72px;
  padding: 2px 2px 2px 1px;
}
.group {
  display: grid;
  grid-template: 34px 34px / 35px;
}
.group.two { grid-template-columns: 35px 35px; }
.group.three { grid-template-columns: 35px 35px 35px; }
.group + .group {
  margin-left: 5px;
  padding-left: 6px;
  border-left: 1px solid #bbb;
}
.group button { display: grid; place-items: center; }
.group svg { width: 30px; height: 30px; overflow: visible; }
.group text {
  font-family: "DejaVu Serif", serif;
  font-weight: bold;
  text-anchor: middle;
}
.group text:not([font-size]) { font-size: 13px; }
.group .big text { font-size: 15px; }
.group .mono text { font: bold 15px "Liberation Mono", monospace; }
.group .letter-p { font-size: 23px; fill: #eee; stroke: #333; }
.label {
  display: flex;
  align-items: center;
  height: 17px;
  background: linear-gradient(#333, #181818);
  font: 13px/16px "Liberation Sans", Arial, sans-serif;
  color: #fff;
}
.label span {
  flex: 1;
  height: 17px;
  text-align: center;
  white-space: nowrap;
}
.label svg { width: 10px; height: 11px; margin-right: 3px; }

/* canvas toolbar */
.toolbar {
  display: flex;
  align-items: center;
  height: 39px;
  padding: 0 2px 2px 0;
  border-top: 2px solid #777;
  border-left: 1px solid #777;
  background: linear-gradient(#fff, #f2f2f2);
}
.tool { width: 35px; height: 34px; display: grid; place-items: center; }
.tool svg { width: 30px; height: 30px; }
.view { width: 34px; border: 1px solid transparent; }
.view svg { width: 28px; height: 28px; }
.selected { border-color: #0a78d0; background: #f3f8fc; }
.sep { width: 1px; height: 27px; margin: 0 4px 0 5px; background: #bbb; }
.view + .sep { margin: 0 8px; }
.view + .sep.tight { margin: 0 0 0 3px; }
.zoom { position: relative; width: 180px; margin-right: 2px; }
.zoom select {
  display: block;
  width: 100%;
  height: 28px;
  padding: 0 3px;
  border: 1px solid #777;
  border-radius: 0;
  background: #fff;
  appearance: none;
  font: inherit;
  color: inherit;
}
.zoom svg { position: absolute; right: 5px; top: 11px; }
.caret { width: 16px; height: 30px; display: grid; place-items: center; }
.caret::before { content: ""; border: 3px solid transparent; border-top-color: #111; border-bottom: 0; }
.grow { flex: 1; }
.caret.last { width: 12px; }

/* definition canvas: a bold line every 519 by 173, a fine line halfway */
.canvas {
  position: relative;
  flex: 1 0 600px;
  overflow: hidden;
  border-left: 1px solid #777;
  border-right: 2px solid #e8e8e8;
  background-color: #d4d0c8;
  background-image:
    linear-gradient(90deg, #bcb8b1 2px, transparent 2px),
    linear-gradient(90deg, #bcb8b1 1px, transparent 1px),
    linear-gradient(#bcb8b1 2px, transparent 2px),
    linear-gradient(#bcb8b1 1px, transparent 1px);
  background-size: 519px 100%, 519px 100%, 100% 173px, 100% 173px;
  background-repeat: repeat-x, repeat-x, repeat-y, repeat-y;
  background-position: 93px 0, 353px 0, 0 144px, 0 58px;
}
.cursor { position: absolute; left: 647px; top: 294px; width: 13px; height: 20px; }

.node {
  position: absolute;
  left: 981px;
  top: 276px;
  width: 259px;
  font: 18px/24px "Open Sans", "Noto Sans", sans-serif;
}
.body {
  position: relative;
  z-index: 1;
  display: grid;
  grid-template-columns: 100px 58px 1fr;
  align-items: center;
  height: 216px;
  padding: 1px 0 3px;
  border: 2px solid #500a00;
  border-radius: 6px;
  background: linear-gradient(#fff0d8 0, #ffcb80 12px, #ffa62f 13px, #ff8f18);
}
.ports {
  display: grid;
  grid-auto-rows: 1fr;
  align-items: center;
  height: 208px;
  margin: 0;
  padding: 0;
  list-style: none;
}
.ports li { position: relative; }
.inputs { text-align: right; }
.ports li::before {
  content: "";
  position: absolute;
  top: 5px;
  width: 8px;
  height: 16px;
  border: 3px solid #000;
  background: #fff;
}
.inputs li::before { left: -10px; border-right: 0; border-radius: 8px 0 0 8px; }
.outputs li::before { right: -10px; border-left: 0; border-radius: 0 8px 8px 0; }
.node-icon { width: 40px; height: 40px; justify-self: center; }
.version {
  margin: -2px 10px 0;
  padding-top: 2px;
  height: 28px;
  border-radius: 0 0 5px 5px;
  background: #500a00;
  color: #f3d8d0;
  font-size: 17px;
  text-align: center;
}
.balloon { position: absolute; right: 4px; top: -17px; width: 20px; height: 19px; z-index: 2; }

.widget {
  position: absolute;
  left: 0;
  bottom: 0;
  display: flex;
  align-items: center;
  height: 35px;
  border: 1px solid #000;
  border-left: 0;
  background: linear-gradient(#f0f0f0, #c0c0c0 50%, #9a9696);
}
.widget button { width: 35px; display: grid; place-items: center; }
.widget svg { width: 24px; height: 24px; overflow: visible; }
.widget .grip { width: 8px; height: 33px; background: #807c7c; }
.tiny { font: bold 9px "Liberation Sans", sans-serif; text-anchor: middle; fill: #222; }
.compass { position: absolute; right: 10px; bottom: 11px; width: 64px; height: 52px; }

/* status bar */
.status {
  display: flex;
  align-items: center;
  justify-content: space-between;
  height: 27px;
  padding: 2px 41px 0 8px;
  border-top: 1px solid #fff;
  box-shadow: inset 0 1px #d4d4d4;
}
.build { color: #777; }

/* taskbar */
.taskbar {
  display: flex;
  align-items: center;
  height: 38px;
  background: #101010;
  color: #fff;
}
.taskbar svg { width: 20px; height: 20px; }
.taskbar text { text-anchor: middle; fill: #fff; font: bold 9px "Open Sans", sans-serif; }
.start { width: 42px; display: grid; place-items: center; }
.apps { display: flex; gap: 1px; margin-left: 347px; }
.apps button { width: 45px; height: 38px; display: grid; place-items: center; }
.apps .running { background: linear-gradient(#76b9ed, #76b9ed) center bottom / 35px 3px no-repeat; }
.apps .current { background-size: 45px 3px; background-color: #292929; }
.apps .lit { background-color: #373535; }
.taskbar .revit { fill: #236ca4; font: bold 18px "Open Sans", sans-serif; }
.taskbar .rstudio { font: 13px "Liberation Serif", serif; }
.taskbar .stg { fill: #333; font: bold 7px "Liberation Sans", sans-serif; }
.taskbar .badge { font: bold 8px "Liberation Sans", sans-serif; }
.tray { display: flex; gap: 10px; margin-left: auto; }
.lang { margin-left: 13px; }
.clock { margin-left: 17px; }
.notify { margin: 0 31px 0 23px; }
```
